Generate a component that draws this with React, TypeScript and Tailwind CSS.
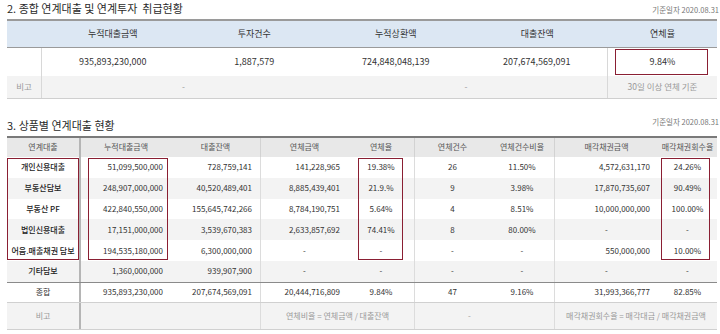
import React from "react";

const FONT = "font-['Noto_Sans_CJK_KR','Noto_Sans',sans-serif]";

type Row = {
  name: string;
  cum: string;
  bal: string;
  od: string;
  rate: string;
  cnt: string;
  cntRate: string;
  sale: string;
  rec: string;
};

const rows: Row[] = [
  { name: "개인신용대출", cum: "51,099,500,000", bal: "728,759,141", od: "141,228,965", rate: "19.38%", cnt: "26", cntRate: "11.50%", sale: "4,572,631,170", rec: "24.26%" },
  { name: "부동산담보", cum: "248,907,000,000", bal: "40,520,489,401", od: "8,885,439,401", rate: "21.9.%", cnt: "9", cntRate: "3.98%", sale: "17,870,735,607", rec: "90.49%" },
  { name: "부동산 PF", cum: "422,840,550,000", bal: "155,645,742,266", od: "8,784,190,751", rate: "5.64%", cnt: "4", cntRate: "8.51%", sale: "10,000,000,000", rec: "100.00%" },
  { name: "법인신용대출", cum: "17,151,000,000", bal: "3,539,670,383", od: "2,633,857,692", rate: "74.41%", cnt: "8", cntRate: "80.00%", sale: "-", rec: "-" },
  { name: "어음.매출채권 담보", cum: "194,535,180,000", bal: "6,300,000,000", od: "-", rate: "-", cnt: "-", cntRate: "-", sale: "550,000,000", rec: "10.00%" },
  { name: "기타담보", cum: "1,360,000,000", bal: "939,907,900", od: "-", rate: "-", cnt: "-", cntRate: "-", sale: "-", rec: "-" },
];

const total: Row = { name: "종합", cum: "935,893,230,000", bal: "207,674,569,091", od: "20,444,716,809", rate: "9.84%", cnt: "47", cntRate: "9.16%", sale: "31,993,366,777", rec: "82.85%" };

const cols2 = "grid grid-cols-[74px_90px_90px_87px_67px_75px_65px_103px_59px]";

function num(v: string, extra = "") {
  const dash = v === "-";
  return (
    <div className={`flex items-center ${dash ? "justify-center" : "justify-end pr-[8px]"} ${extra}`}>{v}</div>
  );
}

function DataRow({ r, bg, isTotal }: { r: Row; bg: string; isTotal?: boolean }) {
  return (
    <div className={`${cols2} ${bg} ${isTotal ? "h-[19px]" : "h-[20.8px]"} text-[8px] text-[#333]`}>
      <div className={`flex items-center justify-center border-r-2 border-[#b5b5b5] ${isTotal ? "" : "font-medium text-[#222]"}`}>{r.name}</div>
      {num(r.cum)}
      {num(r.bal, "border-r border-[#dcdcdc]")}
      {num(r.od)}
      <div className="flex items-center justify-center border-r border-[#dcdcdc]">{r.rate}</div>
      <div className="flex items-center justify-center">{r.cnt}</div>
      <div className="flex items-center justify-center border-r border-[#dcdcdc]">{r.cntRate}</div>
      {num(r.sale)}
      <div className="flex items-center justify-center">{r.rec}</div>
    </div>
  );
}

export default function App() {
  return (
    <div className={`w-[720px] h-[334px] bg-white overflow-hidden ${FONT}`}>
      {/* Section 2 */}
      <div className="pl-[7px] pr-[1px]">
        <div className="flex h-[19px] items-start justify-between">
          <div className="text-[11px] leading-[16px] text-[#2a2a2a]">2. 종합 연계대출 및 연계투자&nbsp;&nbsp;취급현황</div>
          <div className="text-[7.5px] leading-[16px] pt-[2px] text-[#777]">기준일자 2020.08.31</div>
        </div>
        <div className="relative w-[710px] border-t-2 border-[#9a9a9a] text-[9px] text-[#333]">
          <div className="grid grid-cols-[35px_141.5px_141.5px_141.5px_141.5px_109px] h-[26.5px] bg-[#dce7f3] border-b-[1.5px] border-[#9a9a9a]">
            <div />
            <div className="flex items-center justify-center">누적대출금액</div>
            <div className="flex items-center justify-center">투자건수</div>
            <div className="flex items-center justify-center">누적상환액</div>
            <div className="flex items-center justify-center">대출잔액</div>
            <div className="flex items-center justify-center">연체율</div>
          </div>
          <div className="grid grid-cols-[35px_141.5px_141.5px_141.5px_141.5px_109px] h-[28px] bg-white">
            <div className="border-r border-[#d8d8d8]" />
            <div className="flex items-center justify-center">935,893,230,000</div>
            <div className="flex items-center justify-center">1,887,579</div>
            <div className="flex items-center justify-center">724,848,048,139</div>
            <div className="flex items-center justify-center border-r border-[#d8d8d8]">207,674,569,091</div>
            <div className="flex items-center justify-center">9.84%</div>
          </div>
          <div className="grid grid-cols-[35px_283px_283px_109px] h-[23px] bg-[#f3f3f3] border-b border-[#cfcfcf] text-[8.5px] text-[#999]">
            <div className="flex items-center justify-center border-r border-[#d8d8d8]">비고</div>
            <div className="flex items-center justify-center">-</div>
            <div className="flex items-center justify-center border-r border-[#d8d8d8]">-</div>
            <div className="flex items-center justify-center">30일 이상 연체 기준</div>
          </div>
          <div className="absolute left-[608px] top-[28px] w-[93px] h-[26px] border-[1.5px] border-[#8a1f33]" />
        </div>
      </div>

      {/* Section 3 */}
      <div className="pl-[7px] pr-[1px]">
        <div className="flex h-[37px] items-end justify-between pb-[3px]">
          <div className="text-[11px] leading-[16px] text-[#2a2a2a]">3. 상품별 연계대출 현황</div>
          <div className="text-[7.5px] leading-[16px] pb-[3px] text-[#777]">기준일자 2020.08.31</div>
        </div>
        <div className="relative w-[710px] border-t-2 border-[#7a7a7a]">
          <div className={`${cols2} h-[19.5px] bg-[#e8e8e8] text-[8px] text-[#555]`}>
            <div className="flex items-center justify-center border-r-2 border-[#b5b5b5]">연계대출</div>
            <div className="flex items-center justify-center">누적대출금액</div>
            <div className="flex items-center justify-center border-r border-[#d2d2d2]">대출잔액</div>
            <div className="flex items-center justify-center">연체금액</div>
            <div className="flex items-center justify-center border-r border-[#d2d2d2]">연체율</div>
            <div className="flex items-center justify-center">연체건수</div>
            <div className="flex items-center justify-center border-r border-[#d2d2d2]">연체건수비율</div>
            <div className="flex items-center justify-center">매각채권금액</div>
            <div className="flex items-center justify-center">매각채권회수율</div>
          </div>
          {rows.map((r, i) => (
            <DataRow key={r.name} r={r} bg={i % 2 === 0 ? "bg-white" : "bg-[#f3f3f3]"} />
          ))}
          <div className="border-t-[1.5px] border-[#8a8a8a]">
            <DataRow r={total} bg="bg-white" isTotal />
          </div>
          <div className="grid grid-cols-[74px_180px_154px_140px_162px] h-[28px] bg-[#f3f3f3] border-t-[1.5px] border-[#8a8a8a] border-b border-[#d0d0d0] text-[8px] text-[#999]">
            <div className="flex items-center justify-center border-r-2 border-[#b5b5b5]">비고</div>
            <div className="border-r border-[#dcdcdc]" />
            <div className="flex items-center justify-center border-r border-[#dcdcdc]">연체비율 = 연체금액 / 대출잔액</div>
            <div className="flex items-center justify-center pr-[30px] border-r border-[#dcdcdc]">-</div>
            <div className="flex items-center justify-center">매각채권회수율 = 매각대금 / 매각채권금액</div>
          </div>

          <div className="absolute left-0 top-[20px] w-[72px] h-[102px] border-[1.5px] border-[#8a1f33]" />
          <div className="absolute left-[81px] top-[20px] w-[80px] h-[102px] border-[1.5px] border-[#8a1f33]" />
          <div className="absolute left-[351px] top-[20px] w-[45px] h-[102px] border-[1.5px] border-[#8a1f33]" />
          <div className="absolute left-[654px] top-[20px] w-[49px] h-[102px] border-[1.5px] border-[#8a1f33]" />
        </div>
      </div>
    </div>
  );
}
